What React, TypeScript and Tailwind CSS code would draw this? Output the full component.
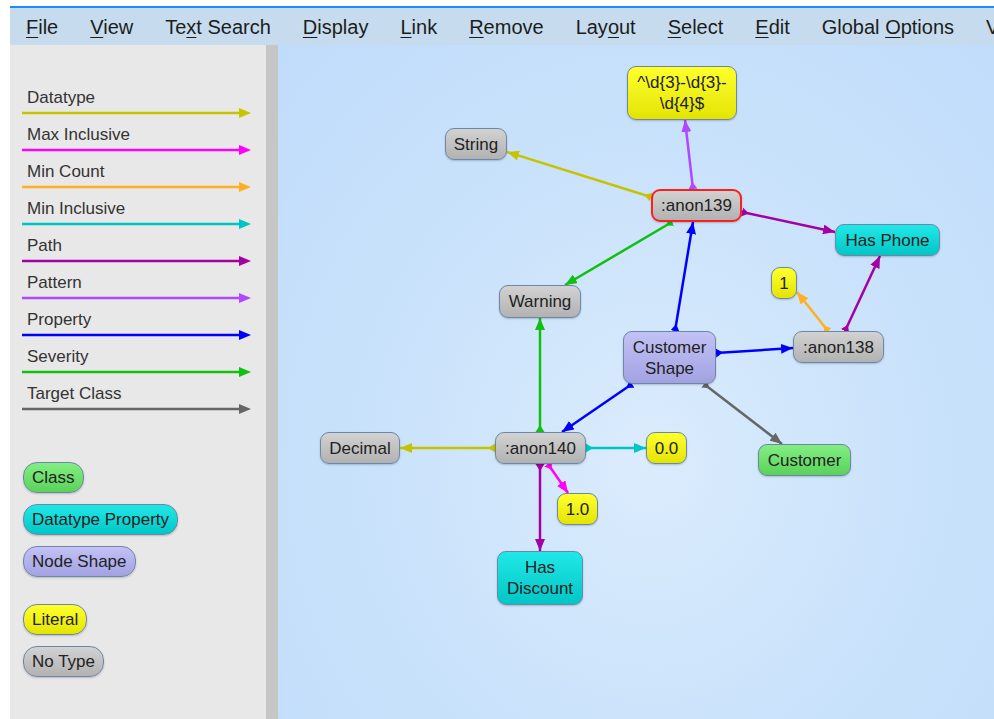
import React from 'react';

type EdgeKind =
  | 'datatype'
  | 'maxInclusive'
  | 'minCount'
  | 'minInclusive'
  | 'path'
  | 'pattern'
  | 'property'
  | 'severity'
  | 'targetClass';

const EDGE_COLORS: Record<EdgeKind, string> = {
  datatype: '#c6c300',
  maxInclusive: '#ff00ff',
  minCount: '#ffb020',
  minInclusive: '#00c4c4',
  path: '#a400a4',
  pattern: '#b048ff',
  property: '#0000ff',
  severity: '#10c010',
  targetClass: '#666666',
};

const LEGEND_EDGES: { label: string; kind: EdgeKind }[] = [
  { label: 'Datatype', kind: 'datatype' },
  { label: 'Max Inclusive', kind: 'maxInclusive' },
  { label: 'Min Count', kind: 'minCount' },
  { label: 'Min Inclusive', kind: 'minInclusive' },
  { label: 'Path', kind: 'path' },
  { label: 'Pattern', kind: 'pattern' },
  { label: 'Property', kind: 'property' },
  { label: 'Severity', kind: 'severity' },
  { label: 'Target Class', kind: 'targetClass' },
];

const MENU = [
  { label: 'File', u: 0 },
  { label: 'View', u: 0 },
  { label: 'Text Search', u: 2 },
  { label: 'Display', u: 0 },
  { label: 'Link', u: 0 },
  { label: 'Remove', u: 0 },
  { label: 'Layout', u: 3 },
  { label: 'Select', u: 0 },
  { label: 'Edit', u: 0 },
  { label: 'Global Options', u: 7 },
  { label: 'Validate', u: -1 },
];

type NodeKind = 'class' | 'datatypeProperty' | 'nodeShape' | 'literal' | 'noType';

const NODE_STYLES: Record<NodeKind, string> = {
  class: 'bg-linear-to-b from-[#82ee82] to-[#5ad25a]',
  datatypeProperty: 'bg-linear-to-b from-[#20e8e8] to-[#00c6c6]',
  nodeShape: 'bg-linear-to-b from-[#c2c2f6] to-[#a2a2e2]',
  literal: 'bg-linear-to-b from-[#ffff2a] to-[#e4e400]',
  noType: 'bg-linear-to-b from-[#d2d2d2] to-[#b2b2b2]',
};

interface GraphNode {
  id: string;
  lines: string[];
  kind: NodeKind;
  x: number;
  y: number;
  w: number;
  h: number;
  selected?: boolean;
}

const NODES: GraphNode[] = [
  { id: 'pattern', lines: ['^\\d{3}-\\d{3}-', '\\d{4}$'], kind: 'literal', x: 349, y: 21, w: 110, h: 54 },
  { id: 'string', lines: ['String'], kind: 'noType', x: 167, y: 83, w: 62, h: 32 },
  { id: 'anon139', lines: [':anon139'], kind: 'noType', x: 373, y: 144, w: 91, h: 33, selected: true },
  { id: 'hasPhone', lines: ['Has Phone'], kind: 'datatypeProperty', x: 557, y: 179, w: 105, h: 32 },
  { id: 'one', lines: ['1'], kind: 'literal', x: 493, y: 222, w: 26, h: 32 },
  { id: 'warning', lines: ['Warning'], kind: 'noType', x: 221, y: 240, w: 82, h: 33 },
  { id: 'customerShape', lines: ['Customer', 'Shape'], kind: 'nodeShape', x: 345, y: 286, w: 93, h: 53 },
  { id: 'anon138', lines: [':anon138'], kind: 'noType', x: 515, y: 286, w: 91, h: 32 },
  { id: 'decimal', lines: ['Decimal'], kind: 'noType', x: 42, y: 387, w: 80, h: 32 },
  { id: 'anon140', lines: [':anon140'], kind: 'noType', x: 217, y: 387, w: 91, h: 32 },
  { id: 'zero', lines: ['0.0'], kind: 'literal', x: 368, y: 387, w: 41, h: 32 },
  { id: 'customer', lines: ['Customer'], kind: 'class', x: 480, y: 399, w: 93, h: 32 },
  { id: 'oneDecimal', lines: ['1.0'], kind: 'literal', x: 279, y: 448, w: 41, h: 32 },
  { id: 'hasDiscount', lines: ['Has', 'Discount'], kind: 'datatypeProperty', x: 219, y: 506, w: 86, h: 54 },
];

// endpoints in canvas coords, already clipped to node borders
const EDGES: { kind: EdgeKind; from: [number, number]; to: [number, number] }[] = [
  { kind: 'datatype', from: [373, 152], to: [229, 107] },
  { kind: 'pattern', from: [415, 144], to: [407, 75] },
  { kind: 'path', from: [464, 167], to: [557, 187] },
  { kind: 'severity', from: [394, 177], to: [287, 240] },
  { kind: 'property', from: [397, 286], to: [415, 177] },
  { kind: 'minCount', from: [550, 286], to: [519, 247] },
  { kind: 'path', from: [567, 286], to: [602, 211] },
  { kind: 'property', from: [438, 308], to: [515, 303] },
  { kind: 'property', from: [354, 339], to: [284, 387] },
  { kind: 'targetClass', from: [426, 339], to: [504, 399] },
  { kind: 'severity', from: [262, 387], to: [262, 273] },
  { kind: 'datatype', from: [217, 403], to: [122, 403] },
  { kind: 'minInclusive', from: [308, 403], to: [368, 403] },
  { kind: 'maxInclusive', from: [270, 419], to: [290, 448] },
  { kind: 'path', from: [262, 419], to: [262, 506] },
];

const LEGEND_NODES: { label: string; kind: NodeKind; gap: string }[] = [
  { label: 'Class', kind: 'class', gap: 'mt-[40px]' },
  { label: 'Datatype Property', kind: 'datatypeProperty', gap: 'mt-[11px]' },
  { label: 'Node Shape', kind: 'nodeShape', gap: 'mt-[11px]' },
  { label: 'Literal', kind: 'literal', gap: 'mt-[27px]' },
  { label: 'No Type', kind: 'noType', gap: 'mt-[11px]' },
];

function MenuItem({ label, u }: { label: string; u: number }) {
  if (u < 0) return <span className="px-4">{label}</span>;
  return (
    <span className="px-4">
      {label.slice(0, u)}
      <span className="underline underline-offset-[3px] decoration-1">{label[u]}</span>
      {label.slice(u + 1)}
    </span>
  );
}

function LegendArrow({ color }: { color: string }) {
  return (
    <svg width="232" height="12" className="ml-[12px] block">
      <line x1="0" y1="6" x2="220" y2="6" stroke={color} strokeWidth="2.5" />
      <path d="M217,1 L229,6 L217,11 z" fill={color} />
    </svg>
  );
}

function Legend() {
  return (
    <aside className="w-[256px] bg-[#e8e8e8] pt-[44px] flex flex-col">
      {LEGEND_EDGES.map(e => (
        <div key={e.label} className="h-[37px] flex flex-col">
          <span className="pl-[17px] text-[17px] leading-[18px] text-[#333]">{e.label}</span>
          <LegendArrow color={EDGE_COLORS[e.kind]} />
        </div>
      ))}
      {LEGEND_NODES.map(n => (
        <div key={n.label} className={`${n.gap} ml-[13px] self-start`}>
          <div
            className={`${NODE_STYLES[n.kind]} h-[31px] px-[8px] flex items-center rounded-[14px] border-[1.5px] border-[#6c88a6] text-[17px] text-[#222] shadow-[0_1px_2px_rgba(0,0,0,0.2)]`}
          >
            {n.label}
          </div>
        </div>
      ))}
    </aside>
  );
}

function Graph() {
  const kinds = Object.keys(EDGE_COLORS) as EdgeKind[];
  return (
    <div className="relative flex-1 overflow-hidden bg-[radial-gradient(ellipse_at_52%_62%,#dbecfd_0%,#cbe3fb_45%,#c0dcfb_100%)]">
      <svg className="absolute inset-0 w-full h-full">
        <defs>
          {kinds.map(k => (
            <React.Fragment key={k}>
              <marker
                id={`end-${k}`}
                markerUnits="userSpaceOnUse"
                markerWidth="12"
                markerHeight="10"
                refX="12"
                refY="5"
                orient="auto"
              >
                <path d="M0,0 L12,5 L0,10 z" fill={EDGE_COLORS[k]} />
              </marker>
              <marker
                id={`start-${k}`}
                markerUnits="userSpaceOnUse"
                markerWidth="8"
                markerHeight="10"
                refX="0"
                refY="5"
                orient="auto"
              >
                <path d="M0,0.5 L7,5 L0,9.5 z" fill={EDGE_COLORS[k]} />
              </marker>
            </React.Fragment>
          ))}
        </defs>
        {EDGES.map((e, i) => (
          <line
            key={i}
            x1={e.from[0]}
            y1={e.from[1]}
            x2={e.to[0]}
            y2={e.to[1]}
            stroke={EDGE_COLORS[e.kind]}
            strokeWidth="2.5"
            markerStart={`url(#start-${e.kind})`}
            markerEnd={`url(#end-${e.kind})`}
          />
        ))}
      </svg>
      {NODES.map(n => (
        <div
          key={n.id}
          className={`${NODE_STYLES[n.kind]} absolute flex flex-col items-center justify-center rounded-[9px] text-[17px] leading-[21px] text-[#222] shadow-[0_1px_2px_rgba(0,0,0,0.2)] ${
            n.selected ? 'border-2 border-[#ff1e1e]' : 'border-[1.5px] border-[#6c88a6]'
          }`}
          style={{ left: n.x, top: n.y, width: n.w, height: n.h }}
        >
          {n.lines.map(l => (
            <span key={l} className="whitespace-nowrap">
              {l}
            </span>
          ))}
        </div>
      ))}
    </div>
  );
}

export default function App() {
  return (
    <div className="h-screen w-full overflow-hidden bg-white pl-[10px] pt-[6px] flex flex-col font-['Liberation_Sans',Arial,sans-serif]">
      {/* Menu bar */}
      <nav className="h-[39px] shrink-0 border-t-2 border-[#1a8cff] bg-[#c6dcee] flex items-center whitespace-nowrap overflow-hidden text-[20px] text-[#1c1c1c]">
        {MENU.map(m => (
          <MenuItem key={m.label} label={m.label} u={m.u} />
        ))}
      </nav>

      <div className="flex flex-1 min-h-0">
        <Legend />
        <div className="w-[12px] bg-[#c6c6c6]" />
        <Graph />
      </div>
    </div>
  );
}
